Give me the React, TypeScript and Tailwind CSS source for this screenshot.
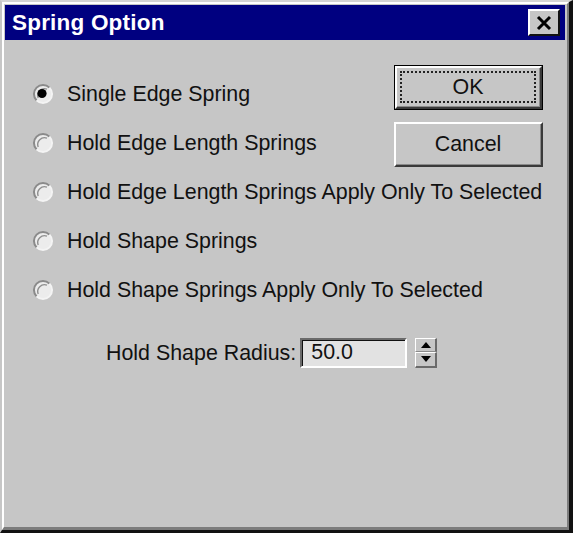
import type { ReactNode } from 'react';

const options = [
  'Single Edge Spring',
  'Hold Edge Length Springs',
  'Hold Edge Length Springs Apply Only To Selected',
  'Hold Shape Springs',
  'Hold Shape Springs Apply Only To Selected',
];

function Radio({ checked }: { checked?: boolean }) {
  return (
    <svg width="22" height="22" viewBox="0 0 22 22" className="shrink-0">
      <circle cx="11" cy="11" r="9" fill="#ececec" />
      <path d="M4.6 17.4 A9 9 0 0 1 17.4 4.6" fill="none" stroke="#8a8a8a" strokeWidth="2" />
      <path d="M6.2 15 A6.8 6.8 0 0 1 15 6.2" fill="none" stroke="#505050" strokeWidth="1.4" opacity="0.6" />
      <path d="M17.4 4.6 A9 9 0 0 1 4.6 17.4" fill="none" stroke="#f4f4f4" strokeWidth="2" />
      {checked && <circle cx="10" cy="10.5" r="4.6" fill="#000" />}
    </svg>
  );
}

function OptionRow({ label, checked }: { label: string; checked?: boolean }) {
  return (
    <div className="flex h-[49px] items-center">
      <div className="ml-[27px] w-[35px]">
        <Radio checked={checked} />
      </div>
      <span className="text-[21.4px] leading-[24px] text-[#111]">{label}</span>
    </div>
  );
}

function WinButton({ children, isDefault }: { children: ReactNode; isDefault?: boolean }) {
  return (
    <div className={isDefault ? 'border border-black' : ''}>
      <div
        className={
          'border-t-2 border-l-2 border-r-2 border-b-2 border-t-white border-l-white border-r-[#3a3a3a] border-b-[#3a3a3a] ' +
          (isDefault ? 'h-[43px]' : 'h-[45px]')
        }
      >
        <div className="flex h-full items-center justify-center border-r border-b border-[#8a8a8a] p-[3px]">
          <div
            className={
              'flex h-full w-full items-center justify-center text-[21.4px] text-[#111] ' +
              (isDefault ? 'border-2 border-dotted border-[#222]' : '')
            }
          >
            {children}
          </div>
        </div>
      </div>
    </div>
  );
}

export default function App() {
  return (
    <div
      className="h-[533px] w-[573px] bg-[#c6c6c6]"
      style={{ fontFamily: '"Liberation Sans", Arial, sans-serif' }}
    >
      <div className="h-full border-t-2 border-l-2 border-r-4 border-b-[3px] border-t-[#d4d4d4] border-l-[#c6c6c6] border-r-[#111] border-b-[#111]">
        <div className="flex h-full flex-col border-t-2 border-l-2 border-r-2 border-b-[3px] border-t-white border-l-white border-r-[#7c7c7c] border-b-[#7c7c7c] pt-px pl-px pr-[2px]">
          {/* title bar */}
          <div className="flex h-[35px] items-center justify-between bg-[#000080] pl-[7px] pr-[5px]">
            <span className="text-[22.5px] font-bold tracking-[0.2px] text-white">Spring Option</span>
            <div className="flex h-[27px] w-[32px] items-center justify-center border-t-2 border-l-2 border-r-2 border-b-2 border-t-white border-l-white border-r-[#111] border-b-[#111] bg-[#c6c6c6]">
              <svg width="18" height="16" viewBox="0 0 18 16">
                <path d="M3 2 L15 14 M15 2 L3 14" stroke="#000" strokeWidth="3" />
              </svg>
            </div>
          </div>

          {/* body */}
          <div className="pt-[25px]">
            <div className="flex items-start">
              <div className="mt-[4.5px] flex-1">
                <OptionRow label={options[0]} checked />
                <OptionRow label={options[1]} />
              </div>
              <div className="mr-[22px] flex w-[149px] flex-col gap-[12px]">
                <WinButton isDefault>OK</WinButton>
                <WinButton>Cancel</WinButton>
              </div>
            </div>
            <OptionRow label={options[2]} />
            <OptionRow label={options[3]} />
            <OptionRow label={options[4]} />

            <div className="mt-[22px] flex items-center pl-[101px]">
              <span className="text-[21.4px] text-[#111]">Hold Shape Radius:</span>
              <div className="ml-[4px] h-[30px] w-[107px] border-t-2 border-l-2 border-r-2 border-b-2 border-t-[#6a6a6a] border-l-[#6a6a6a] border-r-white border-b-white">
                <div className="flex h-full items-center border-t border-l border-[#111] bg-[#e2e2e2] pl-[8px] text-[21.4px] leading-none text-[#111]">
                  50.0
                </div>
              </div>
              <div className="ml-[8px] flex h-[30px] w-[22px] flex-col">
                <div className="flex flex-1 items-center justify-center border-t border-l border-r-2 border-b border-t-white border-l-white border-r-[#6a6a6a] border-b-[#8a8a8a] bg-[#c6c6c6]">
                  <svg width="10" height="6" viewBox="0 0 10 6">
                    <path d="M5 0 L10 6 L0 6 Z" fill="#000" />
                  </svg>
                </div>
                <div className="flex flex-1 items-center justify-center border-t border-l border-r-2 border-b-2 border-t-white border-l-white border-r-[#6a6a6a] border-b-[#6a6a6a] bg-[#c6c6c6]">
                  <svg width="10" height="6" viewBox="0 0 10 6">
                    <path d="M0 0 L10 0 L5 6 Z" fill="#000" />
                  </svg>
                </div>
              </div>
            </div>
          </div>
        </div>
      </div>
    </div>
  );
}
